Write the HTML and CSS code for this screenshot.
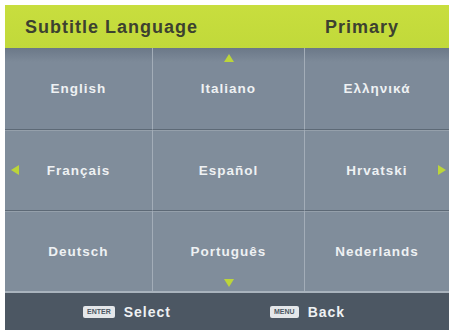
FILE: index.html
```html
<!DOCTYPE html>
<html>
<head>
<meta charset="utf-8">
<link rel="stylesheet" href="styles.css">
</head>
<body>
<div class="screen">
  <div class="header">
    <span class="title">Subtitle Language</span>
    <span class="mode">Primary</span>
  </div>
  <div class="grid">
    <div class="cell">English</div>
    <div class="cell">Italiano<span class="arrow up"></span></div>
    <div class="cell">Ελληνικά</div>
    <div class="cell">Français<span class="arrow left"></span></div>
    <div class="cell">Español</div>
    <div class="cell">Hrvatski<span class="arrow right"></span></div>
    <div class="cell">Deutsch</div>
    <div class="cell">Português<span class="arrow down"></span></div>
    <div class="cell">Nederlands</div>
  </div>
  <div class="footer">
    <div class="hint"><span class="key">ENTER</span>Select</div>
    <div class="hint"><span class="key">MENU</span>Back</div>
  </div>
</div>
</body>
</html>
```
FILE: styles.css
```css
html, body {
  margin: 0;
  padding: 0;
  background: #ffffff;
}
body {
  padding: 5px 2px 4px 5px;
  font-family: "Liberation Sans", Arial, sans-serif;
  font-weight: bold;
}
.screen {
  width: 444px;
  height: 325px;
  display: flex;
  flex-direction: column;
  background: #7b8897;
}
.header {
  height: 43px;
  background: linear-gradient(#c8de3e, #c1d93a);
  display: flex;
  align-items: center;
  color: #3c4130;
  font-size: 18px;
  letter-spacing: 1px;
  padding-top: 1px;
  box-sizing: border-box;
}
.title {
  margin-left: 20px;
  width: 300px;
}
.grid {
  height: 243px;
  display: grid;
  grid-template-columns: 147px 152px 145px;
  grid-template-rows: 81px 81px 81px;
  background: linear-gradient(#6b7888 0px, #7d8a99 14px, #7d8a99 100%);
}
.cell {
  position: relative;
  display: flex;
  align-items: center;
  justify-content: center;
  color: #eef1f3;
  font-size: 13.5px;
  letter-spacing: 1px;
  border-left: 1px solid #a3adb8;
  border-top: 1px solid #5d6976;
  box-shadow: inset 0 1px 0 #95a0ab;
}
.cell:nth-child(3n+1) {
  border-left: none;
}
.cell:nth-child(-n+3) {
  border-top: none;
  box-shadow: none;
}
.cell:nth-child(n+4) {
  background: #808d9b;
}
.arrow {
  position: absolute;
  width: 0;
  height: 0;
}
.arrow.up {
  top: 6px;
  left: 71px;
  border-left: 5px solid transparent;
  border-right: 5px solid transparent;
  border-bottom: 8px solid #bcd53a;
}
.arrow.down {
  bottom: 4px;
  left: 71px;
  border-left: 5px solid transparent;
  border-right: 5px solid transparent;
  border-top: 8px solid #bcd53a;
}
.arrow.left {
  left: 6px;
  top: 35px;
  border-top: 5px solid transparent;
  border-bottom: 5px solid transparent;
  border-right: 8px solid #bcd53a;
}
.arrow.right {
  right: 3px;
  top: 35px;
  border-top: 5px solid transparent;
  border-bottom: 5px solid transparent;
  border-left: 8px solid #bcd53a;
}
.footer {
  flex: 1;
  background: #4c5763;
  border-top: 2px solid #a9b3bd;
  display: flex;
  align-items: center;
  color: #eef1f3;
  font-size: 14px;
  letter-spacing: 1px;
}
.hint {
  display: flex;
  align-items: center;
}
.hint:first-child {
  margin-left: 78px;
  width: 187px;
}
.key {
  display: inline-block;
  background: #e4e7ea;
  color: #4c5763;
  font-size: 7px;
  letter-spacing: 0;
  line-height: 12px;
  height: 12px;
  padding: 0 4px;
  border-radius: 2px;
  margin-right: 9px;
}
```
